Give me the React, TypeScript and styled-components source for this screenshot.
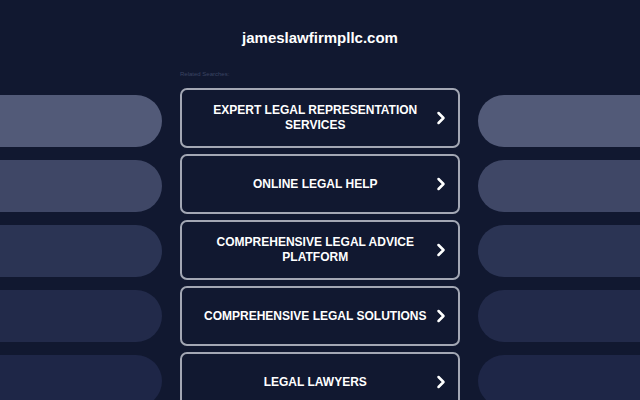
import React from "react";
import styled, { createGlobalStyle } from "styled-components";
import { ChevronRight } from "lucide-react";

const Global = createGlobalStyle`
  html, body { margin: 0; padding: 0; background: #111830; }
  body { font-family: "Liberation Sans", Arial, sans-serif; }
  * { box-sizing: border-box; }
`;

const Page = styled.div`
  width: 640px;
  height: 400px;
  overflow: hidden;
  background: #111830;
  display: flex;
  flex-direction: column;
`;

const Title = styled.h1`
  margin: 0;
  padding-top: 28px;
  font-size: 15px;
  line-height: 20px;
  font-weight: 700;
  color: #ffffff;
  text-align: center;
`;

const Main = styled.div`
  margin-top: 21px;
  display: grid;
  grid-template-columns: 162px 280px 162px;
  column-gap: 18px;
`;

const Side = styled.div`
  padding-top: 26px;
  display: flex;
  flex-direction: column;
  gap: 13px;
`;

const Pill = styled.div<{ $shade: string; $side: "left" | "right" }>`
  height: 52px;
  background: ${(p) => p.$shade};
  border-radius: ${(p) => (p.$side === "left" ? "0 26px 26px 0" : "26px 0 0 26px")};
`;

const Center = styled.div`
  display: flex;
  flex-direction: column;
`;

const Label = styled.div`
  font-size: 6px;
  line-height: 10px;
  color: #3b4462;
  height: 10px;
  margin-bottom: 8.5px;
`;

const List = styled.div`
  display: flex;
  flex-direction: column;
  gap: 6px;
`;

const LinkButton = styled.a`
  display: flex;
  align-items: center;
  height: 60px;
  border: 2px solid #a3a7b4;
  border-radius: 7px;
  padding: 1px 7.5px 0 18px;
  background: #111830;
  color: #ffffff;
  text-decoration: none;
  cursor: pointer;
`;

const LinkText = styled.span`
  flex: 1;
  text-align: center;
  font-size: 12px;
  line-height: 15px;
  font-weight: 700;
  text-transform: uppercase;
`;

const shades = ["#525a78", "#3f4766", "#2b3454", "#222a4a", "#1e2647"];
const items = [
  "Expert Legal Representation Services",
  "Online Legal Help",
  "Comprehensive Legal Advice Platform",
  "Comprehensive Legal Solutions",
  "Legal Lawyers",
];

export default function App() {
  return (
    <Page>
      <Global />
      <Title>jameslawfirmpllc.com</Title>
      <Main>
        <Side>
          {shades.map((s) => (
            <Pill key={s} $shade={s} $side="left" />
          ))}
        </Side>
        <Center>
          <Label>Related Searches:</Label>
          <List>
            {items.map((t) => (
              <LinkButton key={t}>
                <LinkText>{t}</LinkText>
                <ChevronRight size={20} strokeWidth={3} color="#ffffff" />
              </LinkButton>
            ))}
          </List>
        </Center>
        <Side>
          {shades.map((s) => (
            <Pill key={s} $shade={s} $side="right" />
          ))}
        </Side>
      </Main>
    </Page>
  );
}
